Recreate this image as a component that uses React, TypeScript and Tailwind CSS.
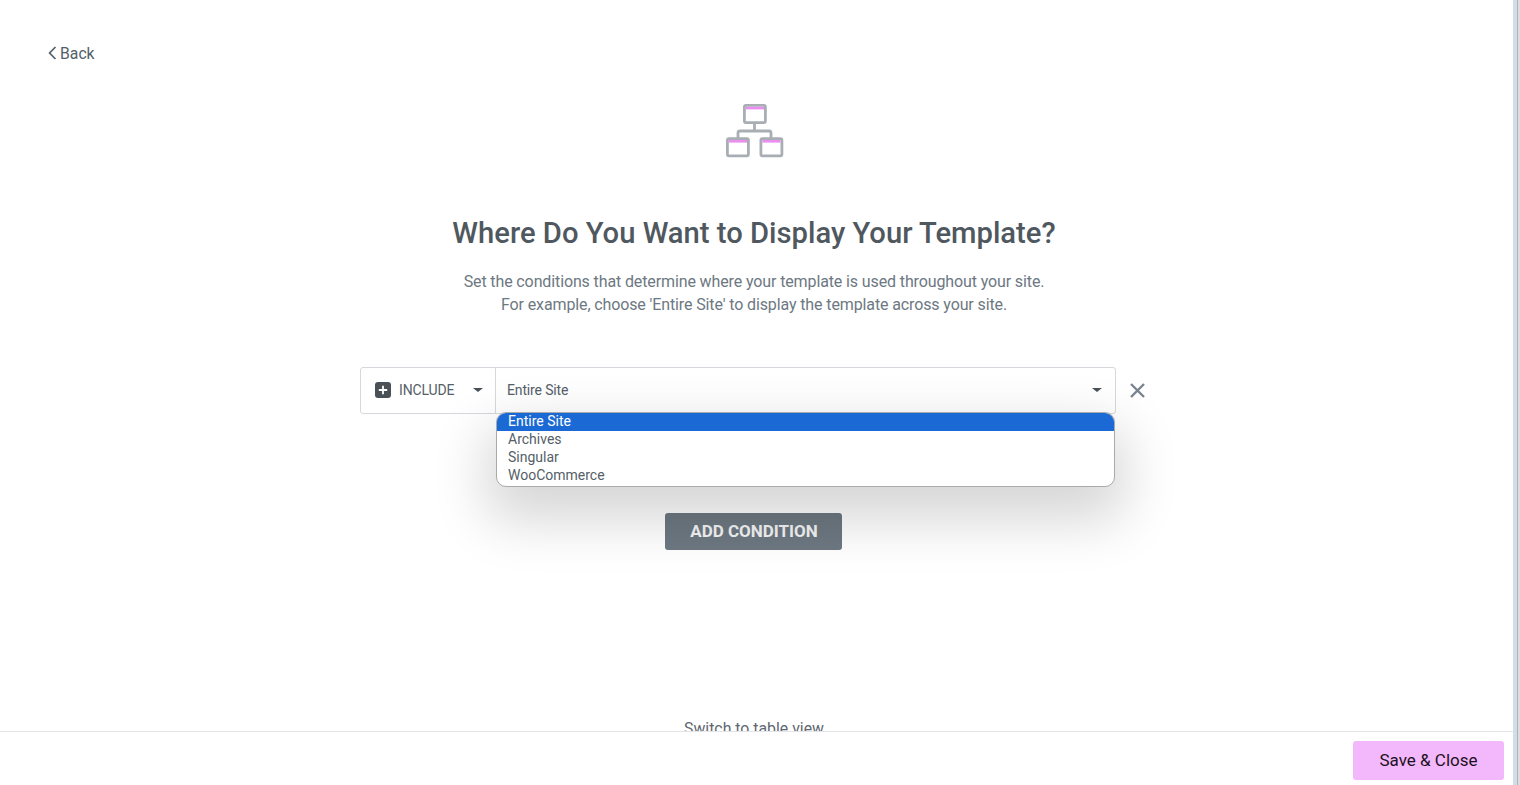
function SiteIcon() {
  return (
    <svg width="58" height="54" viewBox="0 0 58 54" fill="none">
      {/* connector lines */}
      <path d="M28.5 20v7M12 34v-5a2 2 0 0 1 2-2h29a2 2 0 0 1 2 2v5" stroke="#a9aeb5" strokeWidth="2.8" />
      {/* top window */}
      <rect x="18.4" y="1.4" width="21" height="17.2" rx="1.5" fill="#fff" stroke="#a9aeb5" strokeWidth="2.8" />
      <rect x="19.8" y="2.8" width="18.2" height="2.6" fill="#ea8ff0" />
      {/* bottom left */}
      <rect x="1.4" y="34.6" width="21" height="17.2" rx="1.5" fill="#fff" stroke="#a9aeb5" strokeWidth="2.8" />
      <rect x="2.8" y="36" width="18.2" height="2.6" fill="#ea8ff0" />
      {/* bottom right */}
      <rect x="34.9" y="34.6" width="21" height="17.2" rx="1.5" fill="#fff" stroke="#a9aeb5" strokeWidth="2.8" />
      <rect x="36.3" y="36" width="18.2" height="2.6" fill="#ea8ff0" />
    </svg>
  );
}

function Caret() {
  return <span className="h-0 w-0 border-x-[5px] border-t-[4.5px] border-x-transparent border-t-[#495157]" />;
}

export default function App() {
  const options = ['Entire Site', 'Archives', 'Singular', 'WooCommerce'];

  return (
    <div className="flex h-[785px] w-[1520px] overflow-hidden bg-white font-['Roboto',sans-serif] text-[#556068]">
      <div className="flex w-[1513px] flex-col">
        {/* Main content */}
        <div className="relative flex h-[731px] flex-col overflow-hidden pr-[5px]">
          <a className="ml-[48px] mt-[44px] flex h-5 items-center text-[15.75px] leading-5 text-[#556068]">
            <svg width="12" height="16" viewBox="0 0 12 16" fill="none" className="-mt-[2px]">
              <path d="M7.5 2 1.6 8l5.9 6" stroke="#556068" strokeWidth="1.7" />
            </svg>
            <span>Back</span>
          </a>

          <div className="flex flex-col items-center">
            <div className="mt-[40px] ml-[2px]">
              <SiteIcon />
            </div>
            <h1 className="mt-[55px] text-[29.2px] font-medium leading-[40px] text-[#50585f]">
              Where Do You Want to Display Your Template?
            </h1>
            <p className="mt-[17px] text-center text-base leading-[23px] tracking-[-0.12px] text-[#6d7882]">
              Set the conditions that determine where your template is used throughout your site.
              <br />
              For example, choose 'Entire Site' to display the template across your site.
            </p>

            {/* Condition row */}
            <div className="mt-[51px] flex items-center">
              <div className="relative flex h-[47px] w-[756px] rounded-[3px] border border-[#d5d8dc] bg-white text-sm tracking-[-0.15px] text-[#556068]">
                <div className="flex w-[135px] items-center border-r border-[#d5d8dc] pb-px pl-[14px] pr-[12px]">
                  <span className="flex h-4 w-4 items-center justify-center rounded-[3px] bg-[#495157]">
                    <svg width="10" height="10" viewBox="0 0 10 10">
                      <path d="M5 .8v8.4M.8 5h8.4" stroke="#fff" strokeWidth="1.8" />
                    </svg>
                  </span>
                  <span className="ml-2 flex-1">INCLUDE</span>
                  <Caret />
                </div>
                <div className="flex flex-1 items-center pb-px pl-[11px] pr-[13px]">
                  <span className="flex-1">Entire Site</span>
                  <Caret />
                </div>

                {/* Native select popup */}
                <div className="absolute left-[135px] top-[44px] z-10 w-[619px] overflow-hidden rounded-[10px] border border-[#aaaaaa] bg-white pb-px text-sm leading-[16px] tracking-normal text-[#556068] shadow-[0_24px_54px_10px_rgba(0,0,0,0.16)]">
                  {options.map((option, i) => (
                    <div
                      key={option}
                      className={i === 0 ? 'h-[18px] bg-[#1a69d4] pl-[11px] text-white' : 'h-[18px] pl-[11px]'}
                    >
                      {option}
                    </div>
                  ))}
                </div>
              </div>
              <button className="ml-[14px] mr-[3px] flex h-5 w-[15px] items-center justify-center">
                <svg width="15" height="15" viewBox="0 0 15 15" fill="none">
                  <path d="m1 1 13 13M14 1 1 14" stroke="#7a8490" strokeWidth="2.4" />
                </svg>
              </button>
            </div>

            <button className="mr-px mt-[99px] flex h-[37px] w-[177px] items-center justify-center rounded-[3px] bg-[#6d7882] pl-px text-[17px] font-bold text-[#f4f4f4]">
              ADD CONDITION
            </button>

            <a className="mt-[169px] text-[15.85px] leading-5 text-[#5f6871]">Switch to table view</a>
          </div>
        </div>

        {/* Footer */}
        <div className="flex h-[54px] justify-end border-t border-[#e3e5e8] pr-[9px] pt-[9px]">
          <button className="h-[39px] w-[151px] rounded-[3px] bg-[#f3b8fb] text-[17px] font-normal text-[#1b1020]">
            Save &amp; Close
          </button>
        </div>
      </div>

      {/* Edge of the editor behind the dialog */}
      <div className="flex w-[7px]">
        <div className="w-1 bg-[#d3dde5]" />
        <div className="w-px bg-[#a9b4c0]" />
        <div className="w-[2px] bg-[#dedede]" />
      </div>
    </div>
  );
}
